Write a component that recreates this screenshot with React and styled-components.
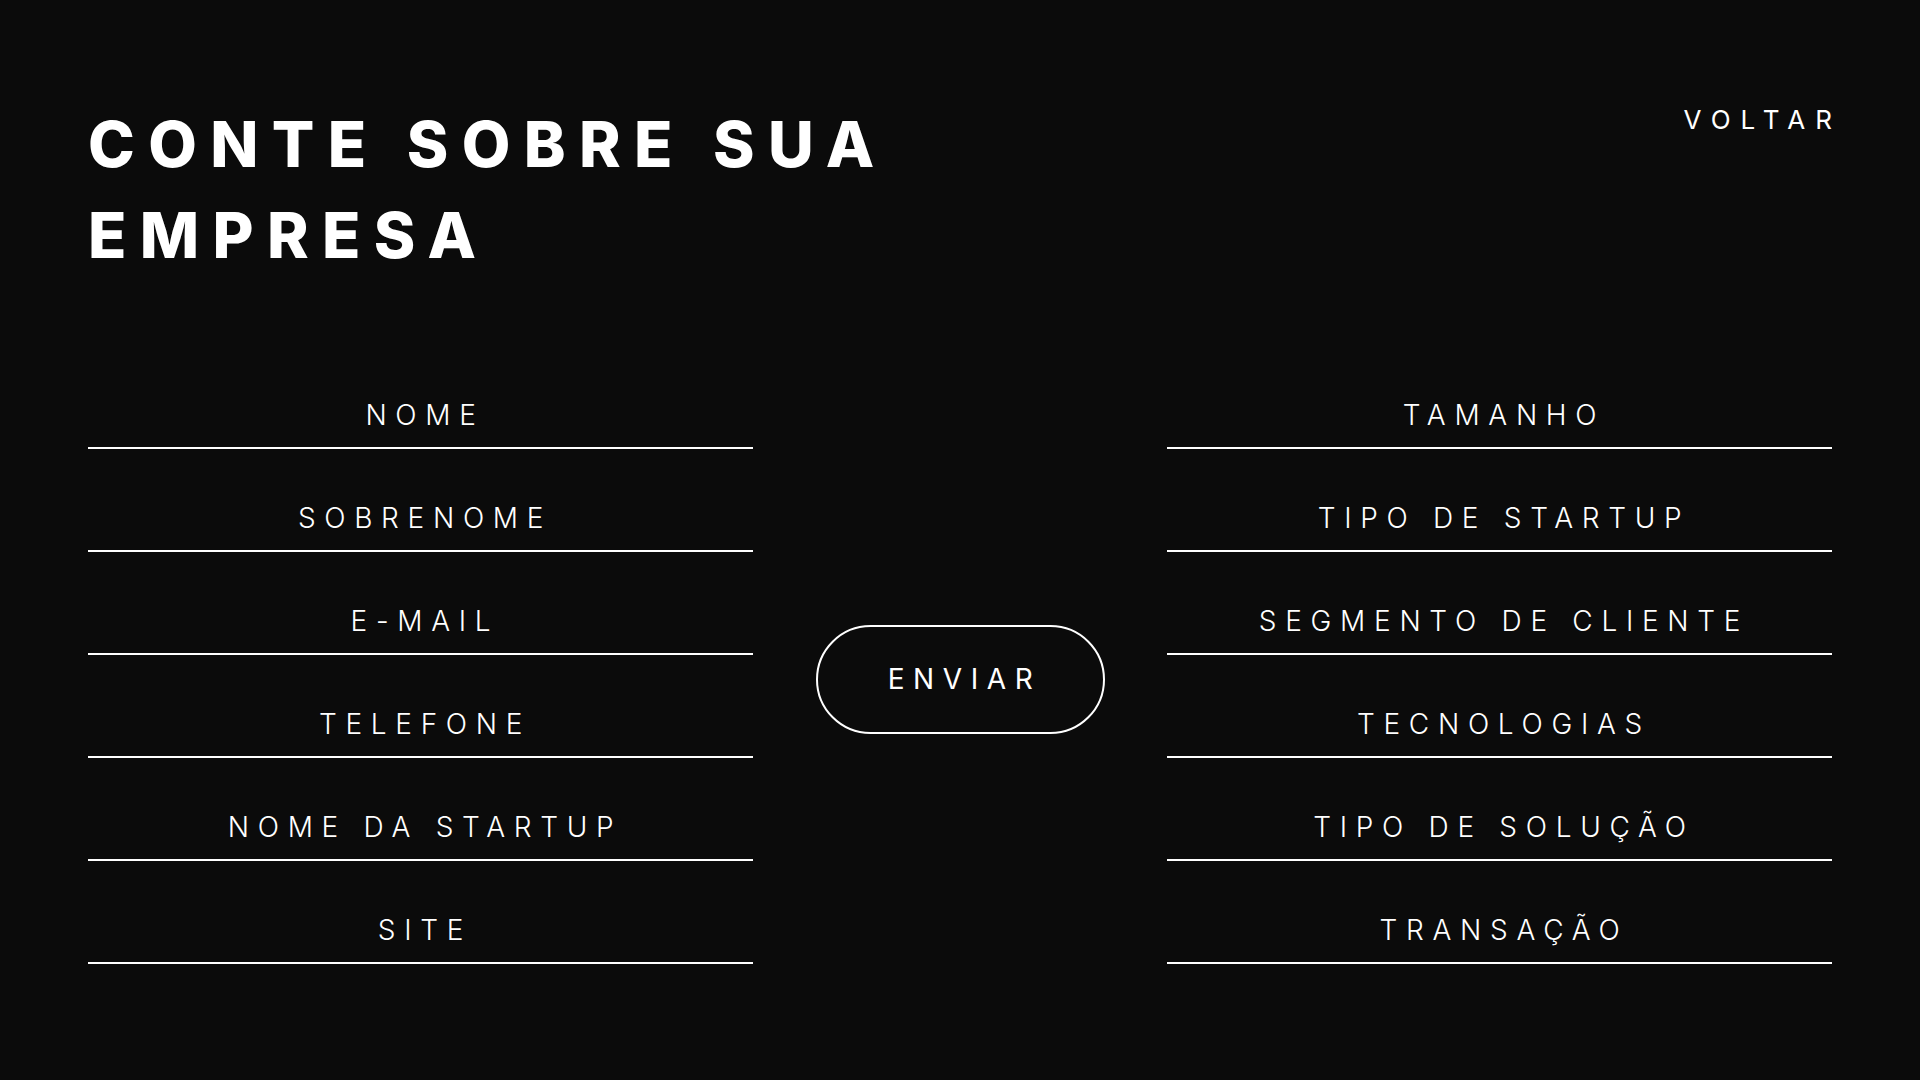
import styled, { createGlobalStyle } from 'styled-components';

const GlobalStyle = createGlobalStyle`
  html, body {
    margin: 0;
    padding: 0;
    background: #0b0b0b;
  }
  * {
    box-sizing: border-box;
  }
`;

const Page = styled.div`
  width: 100%;
  min-height: 1080px;
  background: #0b0b0b;
  color: #ffffff;
  padding: 99px 88px 0;
  font-family: Inter, 'Liberation Sans', sans-serif;
`;

const Header = styled.header`
  display: flex;
  justify-content: space-between;
  align-items: flex-start;
`;

const Title = styled.h1`
  margin: 0;
  max-width: 1000px;
  font-size: 63px;
  line-height: 91px;
  font-weight: 800;
  letter-spacing: 0.212em;
`;

const BackLink = styled.a`
  margin-top: 5px;
  margin-right: -10px;
  font-size: 26px;
  letter-spacing: 10px;
  color: #ffffff;
  text-decoration: none;
  cursor: pointer;
`;

const Form = styled.form`
  display: grid;
  grid-template-columns: 665px 1fr 665px;
  margin-top: 117px;
`;

const Column = styled.div`
  display: flex;
  flex-direction: column;
  gap: 52px;
`;

const Field = styled.div`
  display: flex;
  justify-content: center;
  padding: 0 0 15px 9px;
  border-bottom: 2px solid #ffffff;
`;

const Label = styled.label`
  font-family: Inter, 'Liberation Sans', sans-serif;
  font-weight: 300;
  font-size: 28px;
  line-height: 34px;
  letter-spacing: 8.7px;
  color: #ffffff;
`;

const Middle = styled.div`
  display: flex;
  align-items: center;
  justify-content: center;
`;

const SubmitButton = styled.button`
  width: 289px;
  height: 109px;
  margin-top: -4px;
  padding: 0 0 0 9px;
  border: 2px solid #ffffff;
  border-radius: 55px;
  background: transparent;
  color: #ffffff;
  font-family: Inter, 'Liberation Sans', sans-serif;
  font-size: 28px;
  letter-spacing: 8.6px;
  cursor: pointer;
`;

const leftFields = ['NOME', 'SOBRENOME', 'E-MAIL', 'TELEFONE', 'NOME DA STARTUP', 'SITE'];
const rightFields = [
  'TAMANHO',
  'TIPO DE STARTUP',
  'SEGMENTO DE CLIENTE',
  'TECNOLOGIAS',
  'TIPO DE SOLUÇÃO',
  'TRANSAÇÃO',
];

function App() {
  return (
    <>
      <GlobalStyle />
      <Page>
        <Header>
          <Title>CONTE SOBRE SUA EMPRESA</Title>
          <BackLink>VOLTAR</BackLink>
        </Header>
        <Form onSubmit={(e) => e.preventDefault()}>
          <Column>
            {leftFields.map((f) => (
              <Field key={f}>
                <Label>{f}</Label>
              </Field>
            ))}
          </Column>
          <Middle>
            <SubmitButton type='submit'>ENVIAR</SubmitButton>
          </Middle>
          <Column>
            {rightFields.map((f) => (
              <Field key={f}>
                <Label>{f}</Label>
              </Field>
            ))}
          </Column>
        </Form>
      </Page>
    </>
  );
}

export default App;
